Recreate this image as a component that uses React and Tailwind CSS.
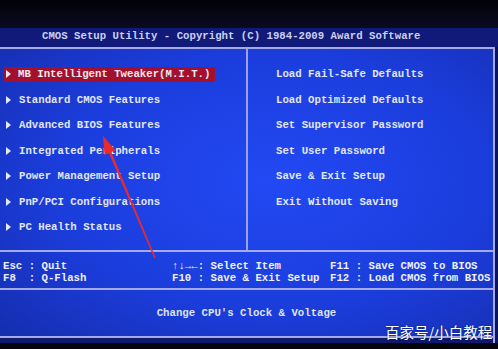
import React from "react";

const Tri = ({ className = "" }) => (
  <svg width="5" height="8" viewBox="0 0 5 8" className={className}>
    <polygon points="0,0 5,4 0,8" fill="#e4e8f8" />
  </svg>
);

const left = [
  "MB Intelligent Tweaker(M.I.T.)",
  "Standard CMOS Features",
  "Advanced BIOS Features",
  "Integrated Peripherals",
  "Power Management Setup",
  "PnP/PCI Configurations",
  "PC Health Status",
];

const right = [
  "Load Fail-Safe Defaults",
  "Load Optimized Defaults",
  "Set Supervisor Password",
  "Set User Password",
  "Save & Exit Setup",
  "Exit Without Saving",
];

export default function App() {
  return (
    <div
      className="relative w-[498px] h-[349px] overflow-hidden bg-[#04040c] text-[10.7px] font-bold text-[#e2e6f6] whitespace-pre"
      style={{ fontFamily: '"Liberation Mono", "DejaVu Sans Mono", monospace' }}
    >
      <div className="h-[28px] bg-[linear-gradient(180deg,#020208,#0a0a22)]" />
      <div className="h-[19px] bg-[#111a78] pl-[42px] leading-[17px] text-[#c9d0f2]">
        CMOS Setup Utility - Copyright (C) 1984-2009 Award Software
      </div>
      <div className="flex">
        <div className="w-[495px] border-t-2 border-r-2 border-[#a3aae6] bg-[radial-gradient(ellipse_at_55%_45%,#2249f4_0%,#1b3ddc_55%,#152dac_100%)]">
          {/* main menu */}
          <div className="flex h-[201px]">
            <div className="w-[246px] pt-[12.5px]">
              {left.map((t, i) => (
                <div key={t} className="h-[25.5px] flex items-center">
                  {i === 0 ? (
                    <div className="ml-[4px] w-[211px] h-[15px] bg-[#a3102e] flex items-center pl-[2px]">
                      <Tri />
                      <span className="ml-[7px] text-[#f0e8ee]">{t}</span>
                    </div>
                  ) : (
                    <div className="flex items-center pl-[6px]">
                      <Tri />
                      <span className="ml-[8px]">{t}</span>
                    </div>
                  )}
                </div>
              ))}
            </div>
            <div className="w-[2px] bg-[#9aa2e2]" />
            <div className="flex-1 pt-[12.5px] pl-[28px]">
              {right.map((t) => (
                <div key={t} className="h-[25.5px] flex items-center">
                  {t}
                </div>
              ))}
            </div>
          </div>
          {/* key help */}
          <div className="border-t-2 border-[#a3aae6] h-[38px] pt-[8px] leading-[12px] flex text-[#eef0fa]">
            <div className="w-[172px] pl-[3px]">
              <div>Esc : Quit</div>
              <div>F8  : Q-Flash</div>
            </div>
            <div className="w-[158px]">
              <div>↑↓→←: Select Item</div>
              <div>F10 : Save &amp; Exit Setup</div>
            </div>
            <div>
              <div>F11 : Save CMOS to BIOS</div>
              <div>F12 : Load CMOS from BIOS</div>
            </div>
          </div>
          {/* status */}
          <div className="border-t-2 border-b-2 border-[#a3aae6] h-[50px] pt-[1px] flex items-center justify-center text-[#dfe4f8]">
            Change CPU's Clock &amp; Voltage
          </div>
          <div className="h-[5px] bg-[#0e1a70]" />
        </div>
        <div className="flex-1 bg-[#0c1460]" />
      </div>

      {/* red annotation arrow */}
      <svg className="absolute left-0 top-0" width="498" height="349">
        <polygon
          points="103,136 115.6,150.2 111.3,152 155.7,257.7 154.3,258.3 108.9,153.1 104.5,154.9"
          fill="#ea2a2c"
        />
      </svg>

      {/* watermark */}
      <div
        className="absolute left-[385px] top-[325px] text-[14.5px] font-normal text-white leading-none"
        style={{ fontFamily: '"Noto Sans CJK SC", sans-serif', textShadow: "0 0 2px rgba(0,0,0,0.5)" }}
      >
        百家号/小白教程
      </div>
    </div>
  );
}
